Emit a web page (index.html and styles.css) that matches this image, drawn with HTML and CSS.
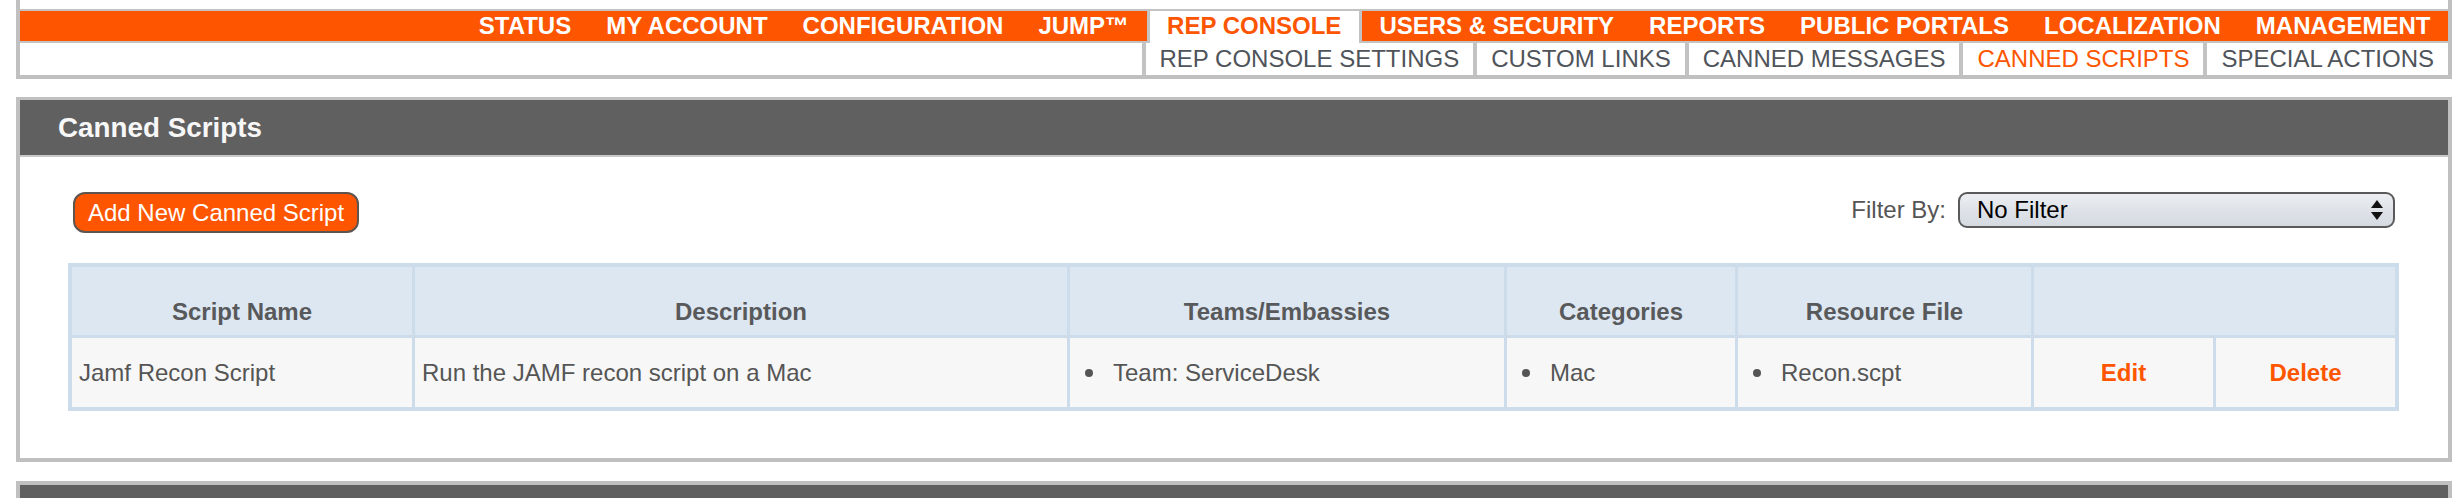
FILE: index.html
```html
<!DOCTYPE html>
<html lang="en">
<head>
<meta charset="utf-8">
<title>Canned Scripts</title>
<link rel="stylesheet" href="styles.css">
</head>
<body>
<div class="page">
  <nav class="navbox">
    <ul class="topnav">
      <li>STATUS</li>
      <li>MY ACCOUNT</li>
      <li>CONFIGURATION</li>
      <li>JUMP™</li>
      <li class="active">REP CONSOLE</li>
      <li>USERS &amp; SECURITY</li>
      <li>REPORTS</li>
      <li>PUBLIC PORTALS</li>
      <li>LOCALIZATION</li>
      <li>MANAGEMENT</li>
    </ul>
    <ul class="subnav">
      <li>REP CONSOLE SETTINGS</li>
      <li>CUSTOM LINKS</li>
      <li>CANNED MESSAGES</li>
      <li class="current">CANNED SCRIPTS</li>
      <li>SPECIAL ACTIONS</li>
    </ul>
  </nav>

  <section class="panel">
    <h2 class="panel-head">Canned Scripts</h2>
    <div class="panel-body">
      <div class="toolbar">
        <button class="btn-add" type="button">Add New Canned Script</button>
        <div class="filter">
          <span class="filter-label">Filter By:</span>
          <div class="fake-select">
            <span>No Filter</span>
            <svg class="arrows" width="12" height="20" viewBox="0 0 12 20"><polygon points="6,0 12,8 0,8" fill="#111"/><polygon points="0,12 12,12 6,20" fill="#111"/></svg>
          </div>
        </div>
      </div>
      <table class="scripts">
        <colgroup>
          <col class="c-name"><col class="c-desc"><col class="c-teams"><col class="c-cat"><col class="c-file"><col class="c-edit"><col class="c-del">
        </colgroup>
        <thead>
          <tr>
            <th>Script Name</th>
            <th>Description</th>
            <th>Teams/Embassies</th>
            <th>Categories</th>
            <th>Resource File</th>
            <th colspan="2"></th>
          </tr>
        </thead>
        <tbody>
          <tr>
            <td>Jamf Recon Script</td>
            <td>Run the JAMF recon script on a Mac</td>
            <td><span class="bullet">Team: ServiceDesk</span></td>
            <td><span class="bullet">Mac</span></td>
            <td><span class="bullet">Recon.scpt</span></td>
            <td class="action">Edit</td>
            <td class="action">Delete</td>
          </tr>
        </tbody>
      </table>
    </div>
  </section>

  <section class="panel panel-next">
    <div class="panel-head"></div>
  </section>
</div>
</body>
</html>
```
FILE: styles.css
```css
html, body {
  margin: 0;
  padding: 0;
  background: #ffffff;
  font-family: "Liberation Sans", Arial, Helvetica, sans-serif;
  overflow: hidden;
}

.page {
  margin: 0 6px 0 16px;
}

.navbox {
  border: 4px solid #c0c0c0;
  border-top: 0;
  padding-top: 9px;
}

.topnav,
.subnav {
  list-style: none;
  margin: 0;
  padding: 0;
  display: flex;
  justify-content: flex-end;
}

.topnav {
  background: #fe5500;
  border-top: 2px solid #c3c3c3;
  border-bottom: 2px solid #c3c3c3;
  height: 30px;
}

.topnav li {
  padding: 0 17.5px;
  font-size: 24px;
  font-weight: bold;
  line-height: 30px;
  color: #ffffff;
  white-space: nowrap;
}

.topnav li.active {
  background: #ffffff;
  color: #fe5500;
  border-left: 3px solid #c3c3c3;
  border-right: 3px solid #c3c3c3;
  height: 32px;
  margin-bottom: -2px;
}

.subnav {
  height: 32px;
}

.subnav li {
  border-left: 4px solid #c3c3c3;
  padding: 0 14px;
  font-size: 24px;
  line-height: 32px;
  color: #4f545a;
  white-space: nowrap;
}

.subnav li.current {
  color: #fe5500;
}

.panel {
  margin-top: 18px;
  border: 4px solid #c0c0c0;
  border-top-width: 3px;
}

.panel-head {
  margin: 0;
  height: 55px;
  background: #606060;
  border-bottom: 2px solid #c8c8c8;
  color: #f7f7f7;
  font-size: 27.8px;
  font-weight: bold;
  line-height: 55px;
  padding-left: 38px;
}

.panel-body {
  padding: 35px 49px 47px 48px;
}

.toolbar {
  display: flex;
  justify-content: space-between;
  align-items: flex-start;
  padding: 0 4px 0 5px;
  margin-bottom: 30px;
}

.btn-add {
  height: 41px;
  padding: 0 13px;
  background: #fe5500;
  border: 2px solid #5e5550;
  border-radius: 12px;
  color: #ffffff;
  font-family: "Liberation Sans", Arial, sans-serif;
  font-size: 24px;
  line-height: 37px;
}

.filter {
  display: flex;
  align-items: center;
  gap: 12px;
  height: 36px;
}

.filter-label {
  font-size: 24px;
  color: #555555;
}

.fake-select {
  box-sizing: border-box;
  width: 437px;
  height: 36px;
  border: 2px solid #5a5a5a;
  border-radius: 9px;
  background: linear-gradient(#eceef2 0%, #e0e4e9 45%, #d5dae1 100%);
  display: flex;
  align-items: center;
  justify-content: space-between;
  padding: 0 10px 0 17px;
  font-size: 24px;
  color: #000000;
}

.arrows {
  display: block;
}

.scripts {
  width: 100%;
  table-layout: fixed;
  border-collapse: separate;
  border-spacing: 3px;
  border: 1px solid #cddcea;
  background: #cddcea;
  font-size: 24px;
}

.c-name { width: 340px; }
.c-desc { width: 652px; }
.c-teams { width: 434px; }
.c-cat { width: 228px; }
.c-file { width: 293px; }
.c-edit { width: 179px; }
.c-del { width: 179px; }

.scripts th {
  background: #dde7f2;
  height: 68px;
  padding: 0 7px 9px;
  vertical-align: bottom;
  text-align: center;
  font-weight: bold;
  color: #58595b;
  box-sizing: border-box;
}

.scripts td {
  background: #f7f7f7;
  height: 69px;
  padding: 0 7px;
  vertical-align: middle;
  color: #555555;
  box-sizing: border-box;
  white-space: nowrap;
}

.bullet {
  display: flex;
  align-items: center;
  gap: 20px;
  padding-left: 8px;
}

.bullet::before {
  content: "";
  width: 8px;
  height: 8px;
  border-radius: 50%;
  background: #555555;
  flex: none;
}

.scripts td.action {
  text-align: center;
  font-weight: bold;
  color: #fe5500;
}

.panel-next {
  margin-top: 19px;
  border-top-width: 4px;
  border-bottom: 0;
}

.panel-next .panel-head {
  height: 40px;
  border-bottom: 0;
}
```
